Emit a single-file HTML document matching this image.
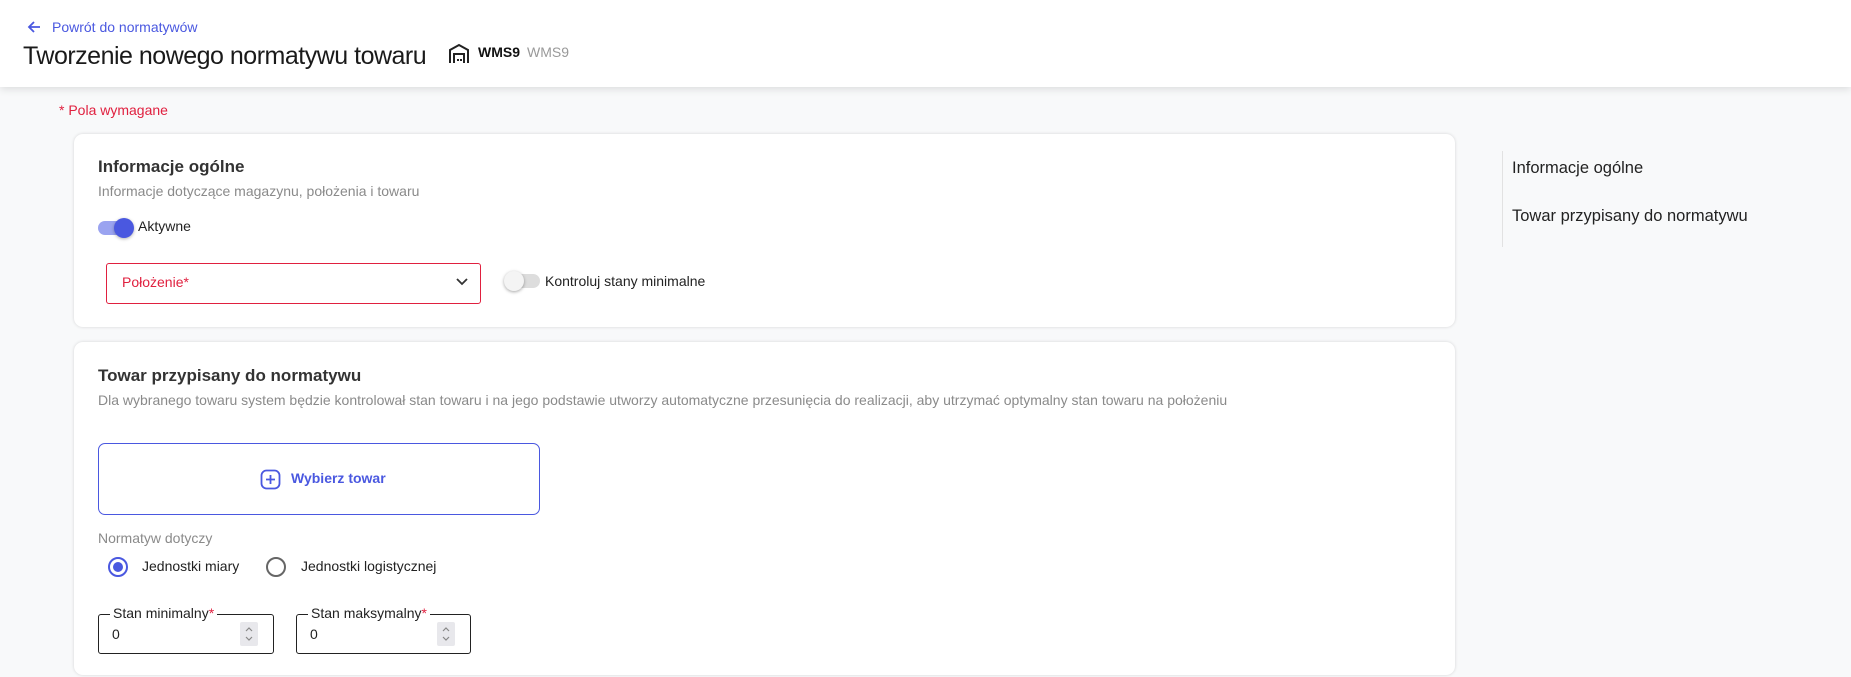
<!DOCTYPE html>
<html><head><meta charset="utf-8"><style>
*{box-sizing:border-box;margin:0;padding:0}
html{width:1851px;height:677px;overflow:hidden}
body{width:1851px;height:677px;overflow:hidden;background:#f8f9fa;font-family:"Liberation Sans",sans-serif;position:relative;color:#222}
.abs{position:absolute;white-space:nowrap}
.hdr{position:absolute;left:0;top:0;width:1851px;height:87px;background:#fff;box-shadow:0 2px 8px rgba(0,0,0,.12)}
.card{position:absolute;left:74px;width:1381px;background:#fff;border-radius:9px;box-shadow:0 0 3px rgba(0,0,0,.15)}
.h{font-weight:bold;font-size:17px;color:#333}
.sub{font-size:14px;color:#8a8a8a}
</style></head><body>
<div class="hdr">
 <svg class="abs" style="left:26px;top:19px" width="16" height="16" viewBox="0 0 16 16"><path d="M14 8H3M8 3L3 8l5 5" stroke="#4a58e0" stroke-width="1.8" fill="none"/></svg>
 <div class="abs" style="left:52px;top:19px;font-size:14px;color:#4a58e0">Powrót do normatywów</div>
 <div class="abs" style="left:23px;top:42px;font-size:25px;color:#1a1a1a;letter-spacing:-0.5px">Tworzenie nowego normatywu towaru</div>
 <svg class="abs" style="left:448px;top:43px" width="22" height="22" viewBox="0 0 22 22"><path d="M2 20V7l9-5 9 5v13M6 20V11h10v9" stroke="#222" stroke-width="2" fill="none"/><rect x="9" y="16" width="2" height="2" fill="#222"/><rect x="12" y="16" width="2" height="2" fill="#222"/></svg>
 <div class="abs" style="left:478px;top:44px;font-size:14px;font-weight:bold;color:#111">WMS9</div>
 <div class="abs" style="left:527px;top:44px;font-size:14px;color:#999">WMS9</div>
</div>
<div class="abs" style="left:59px;top:102px;font-size:14px;color:#e0203f">* Pola wymagane</div>

<div class="card" style="top:134px;height:193px"></div>
<div class="abs h" style="left:98px;top:157px">Informacje ogólne</div>
<div class="abs sub" style="left:98px;top:183px">Informacje dotyczące magazynu, położenia i towaru</div>
<div class="abs" style="left:98px;top:221px;width:30px;height:14px;border-radius:7px;background:#9aa3f0"></div>
<div class="abs" style="left:114px;top:218px;width:20px;height:20px;border-radius:50%;background:#4a58e0;box-shadow:0 1px 3px rgba(0,0,0,.3)"></div>
<div class="abs" style="left:138px;top:218px;font-size:14px">Aktywne</div>
<div class="abs" style="left:106px;top:263px;width:375px;height:41px;border:1.5px solid #e0203f;border-radius:3px"></div>
<div class="abs" style="left:122px;top:274px;font-size:14px;color:#e0203f">Położenie*</div>
<svg class="abs" style="left:455px;top:277px" width="14" height="10" viewBox="0 0 14 10"><path d="M2 2l5 5 5-5" stroke="#333" stroke-width="1.8" fill="none"/></svg>
<div class="abs" style="left:506px;top:274px;width:34px;height:14px;border-radius:7px;background:#ddd"></div>
<div class="abs" style="left:504px;top:271px;width:20px;height:20px;border-radius:50%;background:#f4f4f4;box-shadow:0 1px 3px rgba(0,0,0,.35)"></div>
<div class="abs" style="left:545px;top:273px;font-size:14px">Kontroluj stany minimalne</div>

<div class="card" style="top:342px;height:333px"></div>
<div class="abs h" style="left:98px;top:366px">Towar przypisany do normatywu</div>
<div class="abs sub" style="left:98px;top:392px">Dla wybranego towaru system będzie kontrolował stan towaru i na jego podstawie utworzy automatyczne przesunięcia do realizacji, aby utrzymać optymalny stan towaru na położeniu</div>
<div class="abs" style="left:98px;top:443px;width:442px;height:72px;border:1.5px solid #4a58e0;border-radius:7px"></div>
<svg class="abs" style="left:260px;top:469px" width="21" height="21" viewBox="0 0 21 21"><rect x="1.5" y="1.5" width="18" height="18" rx="5" stroke="#4a58e0" stroke-width="1.8" fill="none"/><path d="M10.5 6v9M6 10.5h9" stroke="#4a58e0" stroke-width="1.8"/></svg>
<div class="abs" style="left:291px;top:470px;font-size:14px;font-weight:bold;color:#4a58e0">Wybierz towar</div>
<div class="abs sub" style="left:98px;top:530px">Normatyw dotyczy</div>
<div class="abs" style="left:108px;top:557px;width:20px;height:20px;border-radius:50%;border:2px solid #4a58e0"></div>
<div class="abs" style="left:113px;top:562px;width:10px;height:10px;border-radius:50%;background:#4a58e0"></div>
<div class="abs" style="left:142px;top:558px;font-size:14px">Jednostki miary</div>
<div class="abs" style="left:266px;top:557px;width:20px;height:20px;border-radius:50%;border:2px solid #666"></div>
<div class="abs" style="left:301px;top:558px;font-size:14px">Jednostki logistycznej</div>

<div class="abs" style="left:98px;top:614px;width:176px;height:40px;border:1.5px solid #222;border-radius:3px"></div>
<div class="abs" style="left:110px;top:605px;padding:0 3px;background:#fff;font-size:14px">Stan minimalny<span style="color:#e0203f">*</span></div>
<div class="abs" style="left:112px;top:626px;font-size:14px">0</div>
<svg class="abs" style="left:240px;top:622px" width="18" height="24" viewBox="0 0 18 24"><rect width="18" height="24" rx="2" fill="#e8e8ec"/><path d="M6 9l3-3 3 3M6 15l3 3 3-3" stroke="#888" stroke-width="1.2" fill="none"/></svg>
<div class="abs" style="left:296px;top:614px;width:175px;height:40px;border:1.5px solid #222;border-radius:3px"></div>
<div class="abs" style="left:308px;top:605px;padding:0 3px;background:#fff;font-size:14px">Stan maksymalny<span style="color:#e0203f">*</span></div>
<div class="abs" style="left:310px;top:626px;font-size:14px">0</div>
<svg class="abs" style="left:437px;top:622px" width="18" height="24" viewBox="0 0 18 24"><rect width="18" height="24" rx="2" fill="#e8e8ec"/><path d="M6 9l3-3 3 3M6 15l3 3 3-3" stroke="#888" stroke-width="1.2" fill="none"/></svg>

<div class="abs" style="left:1502px;top:151px;width:1px;height:96px;background:#e2e2e2"></div>
<div class="abs" style="left:1512px;top:159px;font-size:16.5px;color:#222">Informacje ogólne</div>
<div class="abs" style="left:1512px;top:207px;font-size:16.5px;color:#222">Towar przypisany do normatywu</div>
</body></html>
